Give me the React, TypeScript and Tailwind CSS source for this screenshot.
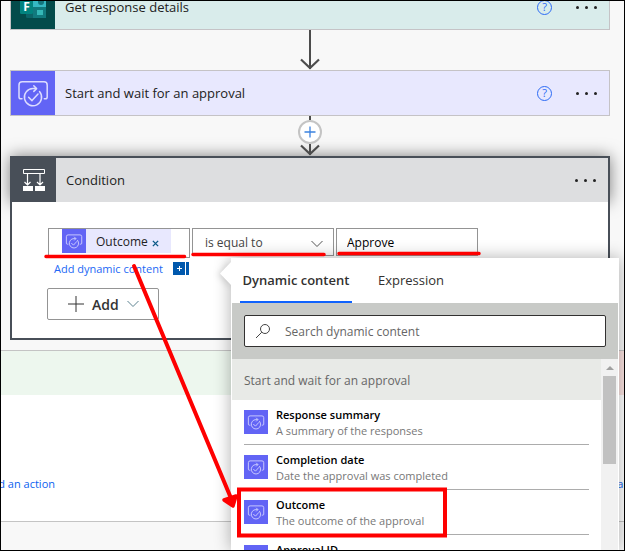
import type { ReactNode } from "react";

function ApprovalIcon({ className }: { className: string }) {
  return (
    <svg viewBox="0 0 44 44" className={`shrink-0 bg-[#6264f5] ${className}`} aria-hidden="true">
      <g fill="none" stroke="#dcdcff" strokeWidth="1.5" strokeLinecap="round" strokeLinejoin="round">
        <path d="M11 27.8 H9.8 Q8 27.8 8 26 V14 Q8 10.8 11.2 10.8 H33 Q36.200 10.8 36.200 14 V26 Q36.200 27.8 34.400 27.8 H33.300" />
        <path d="M24.500 17.600 H22 A8.600 8.600 0 1 0 28.500 20.600" />
        <path d="M22.800 14.800 L25.600 17.600 L22.800 20.400" />
        <path d="M17.600 26.200 L21 29.600 L27 23" />
      </g>
    </svg>
  );
}

function FormsIcon() {
  return (
    <svg viewBox="0 0 44 44" className="h-11 w-11 shrink-0 bg-[#034b4b]" aria-hidden="true">
      <rect x="15" y="9" width="20" height="24" rx="1.500" fill="#0c6468" />
      <rect x="22" y="9" width="13" height="13" fill="#35b8c3" />
      <circle cx="30" cy="17" r="3" fill="#13757d" />
      <rect x="22" y="22" width="13" height="11" fill="#117a7e" />
      <rect x="26" y="25" width="6" height="5" fill="#35b8b8" />
      <rect x="9" y="13" width="13" height="16" rx="1.500" fill="#02837f" />
      <text x="15.500" y="26" textAnchor="middle" fontSize="12" fontWeight="700" fill="#fff" fontFamily="Open Sans, sans-serif">
        F
      </text>
    </svg>
  );
}

function ConditionIcon() {
  return (
    <svg viewBox="0 0 44 44" className="h-11 w-11 shrink-0 bg-[#484f58]" aria-hidden="true">
      <g fill="none" stroke="#fff">
        <path d="M11.500 11.500 H32.500 V15.500 H11.500 Z" />
        <path d="M15.500 16 V27 M12.500 24 L15.500 27 L18.500 24 M28 16 V27 M25 24 L28 27 L31 24" strokeWidth="1.200" />
      </g>
      <path d="M11 28 H21 V33 H11 Z M23 28 H33 V33 H23 Z" fill="#fff" />
    </svg>
  );
}

function MoreButton() {
  return (
    <button type="button" aria-label="More commands" className="flex h-6 w-6 items-center justify-center gap-[6px]">
      <span className="h-[3px] w-[3px] shrink-0 rounded-full bg-[#222]" />
      <span className="h-[3px] w-[3px] shrink-0 rounded-full bg-[#222]" />
      <span className="h-[3px] w-[3px] shrink-0 rounded-full bg-[#222]" />
    </button>
  );
}

function ActionCard({ icon, title, className }: { icon: ReactNode; title: string; className: string }) {
  return (
    <section className={`flex h-[46px] shrink-0 items-center border border-[#c5c3c6] pr-[11px] ${className}`}>
      {icon}
      <h2 className="flex-1 pl-[10px] text-[13px] leading-5">{title}</h2>
      <button
        type="button"
        aria-label="Help"
        className="mr-[22px] flex h-[15px] w-[15px] items-center justify-center rounded-full border border-[#2c6bf5] text-[11px] leading-3 text-[#2c6bf5]"
      >
        ?
      </button>
      <MoreButton />
    </section>
  );
}

function ArrowTip() {
  return (
    <svg viewBox="0 0 20 12" className="h-3 w-5 shrink-0" aria-hidden="true">
      <path d="M1 1.500 L10 10 L19 1.500" fill="none" stroke="#4c4c4c" strokeWidth="2.200" />
    </svg>
  );
}

function Chevron({ className }: { className: string }) {
  return (
    <svg viewBox="0 0 12 8" className={`h-2 w-3 shrink-0 ${className}`} aria-hidden="true">
      <path d="M0.500 1 L6 6.500 L11.500 1" fill="none" stroke="currentColor" />
    </svg>
  );
}

function Branch({ tint, children }: { tint: string; children: ReactNode }) {
  return (
    <section className="flex h-[172px] flex-1 flex-col border-y border-[#c4c4c4] bg-white">
      <div className={`h-11 ${tint}`} />
      <div className="flex pt-[79px] text-[11px] leading-5 text-[#0b62f0]">{children}</div>
    </section>
  );
}

const outputs = [
  { name: "Response summary", detail: "A summary of the responses" },
  { name: "Completion date", detail: "Date the approval was completed" },
  { name: "Outcome", detail: "The outcome of the approval" },
  { name: "Approval ID", detail: "The unique identifier of the approval" },
];

function DynamicContentPanel() {
  return (
    <aside className="absolute top-[257px] right-[5px] bottom-0 left-[230px] bg-white shadow-[0_0_16px_rgba(0,0,0,0.32)]">
      <svg
        viewBox="0 0 12 26"
        className="absolute top-[3px] -left-[11px] h-[26px] w-3 drop-shadow-[-2px_1px_3px_rgba(0,0,0,0.15)]"
        aria-hidden="true"
      >
        <path d="M12 0 L0 12.500 L12 25 Z" fill="#fff" />
      </svg>
      <div className="relative flex h-full flex-col overflow-hidden bg-white px-px">
        <div role="tablist" className="flex h-[45px] shrink-0 gap-4 pl-2 text-[13px] text-[#323130]">
          <button
            role="tab"
            aria-selected="true"
            type="button"
            className="w-28 border-b-2 border-[#0f62fe] pt-[2px] font-semibold whitespace-nowrap"
          >
            Dynamic content
          </button>
          <button role="tab" aria-selected="false" type="button" className="border-b-2 border-transparent px-[10px] pt-[2px]">
            Expression
          </button>
        </div>
        <div className="h-14 shrink-0 bg-[#c8cac7] p-3">
          <label className="flex h-8 items-center rounded-[2px] border border-[#323130] bg-white pl-[10px]">
            <svg viewBox="0 0 16 16" className="h-4 w-4 shrink-0" aria-hidden="true">
              <g fill="none" stroke="#444">
                <circle cx="10" cy="6" r="4.500" />
                <path d="M6.800 9.200 L1 15" />
              </g>
            </svg>
            <input
              type="text"
              aria-label="Search dynamic content"
              placeholder="Search dynamic content"
              className="min-w-0 flex-1 pt-[2px] pl-[14px] text-[12px] outline-none placeholder:text-[#666]"
            />
          </label>
        </div>
        <div className="flex min-h-0 flex-1">
          <div className="min-w-0 flex-1 overflow-hidden">
            <h3 className="flex h-[41px] items-center bg-[#e8eae7] pt-[2px] pl-3 text-[12px] text-[#666]">
              Start and wait for an approval
            </h3>
            <ul className="pr-3 pl-3">
              {outputs.map((o) => (
                <li key={o.name} className="h-[45px] border-b border-[#acacac]">
                  <button type="button" className="flex h-full w-full items-center gap-2 text-left">
                    <ApprovalIcon className="h-6 w-6" />
                    <span className="flex flex-col pt-[2px] text-[11px] leading-4">
                      <span className="font-semibold text-black">{o.name}</span>
                      <span className="text-[#777]">{o.detail}</span>
                    </span>
                  </button>
                </li>
              ))}
            </ul>
          </div>
          <div className="w-[17px] bg-[#f1f1f1] px-[2px]">
            <div className="flex h-[17px] items-center justify-center">
              <svg viewBox="0 0 8 4" className="h-1 w-2" aria-hidden="true">
                <path d="M0 4 L4 0 L8 4 Z" fill="#a0a0a0" />
              </svg>
            </div>
            <div className="h-[88px] bg-[#c1c1c1]" />
          </div>
        </div>
      </div>
    </aside>
  );
}

function Annotations() {
  return (
    <svg viewBox="0 0 625 551" className="pointer-events-none absolute -top-px -left-px h-[551px] w-[625px]" aria-hidden="true">
      <g fill="none" stroke="#fe0000" strokeLinecap="round" strokeLinejoin="round">
        <path d="M46 256.500 H184.500 M193 254.500 H324 M339 253.500 H479" strokeWidth="3.500" />
        <path d="M134 266 L233 503" strokeWidth="4" />
        <path d="M224 500 L233 506 L236 496 Z" fill="#fe0000" strokeWidth="3.500" />
        <path d="M239 489.500 H445 V535.500 H239 Z" strokeWidth="4" strokeLinejoin="miter" />
      </g>
    </svg>
  );
}

export default function App() {
  return (
    <main className="relative flex h-screen flex-col overflow-hidden border border-black bg-[#f8f8f8] font-['Open_Sans','Noto_Sans',sans-serif] text-[#222]">
      <div className="flex flex-col pr-[14px] pl-[9px]">
        <ActionCard icon={<FormsIcon />} title="Get response details" className="-mt-[17px] bg-[#d9eceb]" />
        <div className="flex h-10 flex-col items-center">
          <div className="-mb-[11px] w-[2px] flex-1 bg-[#4c4c4c]" />
          <ArrowTip />
        </div>
        <ActionCard icon={<ApprovalIcon className="h-11 w-11" />} title="Start and wait for an approval" className="bg-[#e8e8fe]" />
        <div className="relative z-10 flex h-10 flex-col items-center">
          <div className="h-1 w-[2px] bg-[#4c4c4c]" />
          <button
            type="button"
            aria-label="Insert a new step"
            className="flex h-6 w-6 shrink-0 items-center justify-center rounded-full border-2 border-[#c4c4c4] bg-white"
          >
            <svg viewBox="0 0 12 12" className="h-3 w-3" aria-hidden="true">
              <path d="M6 0.500 V11.500 M0.500 6 H11.500" stroke="#3b82e0" strokeWidth="1.300" />
            </svg>
          </button>
          <div className="-mb-[11px] w-[2px] flex-1 bg-[#4c4c4c]" />
          <ArrowTip />
        </div>

        <section>
          <header className="flex h-[46px] items-center border-x-2 border-t-2 border-[#484f58] bg-[#dddee0] pr-[11px] shadow-[0_0_16px_rgba(0,0,0,0.5)]">
            <ConditionIcon />
            <h2 className="flex-1 pl-[10px] text-[13px] leading-5">Condition</h2>
            <MoreButton />
          </header>
          <div className="relative h-[138px] border-x-2 border-b-2 border-[#484f58] bg-white pt-[26px] pl-[35px]">
            <div className="flex items-start gap-[2px] pl-px text-[12px]">
              <div className="flex h-[30px] w-[142px] border border-[#949494] pl-[13px]">
                <span className="flex h-6 w-[109px] items-center bg-[#e8e8fe]">
                  <ApprovalIcon className="h-6 w-6" />
                  <span className="pt-[2px] pl-[10px]">Outcome</span>
                  <button type="button" aria-label="Remove Outcome" className="flex flex-1 pt-1 pl-1">
                    <svg viewBox="0 0 8 8" className="h-[7px] w-[7px]" aria-hidden="true">
                      <path d="M1 1 L7 7 M7 1 L1 7" stroke="#0b5a87" strokeWidth="1.600" />
                    </svg>
                  </button>
                </span>
              </div>
              <div className="grid h-7 w-[142px] items-center border border-[#949494]">
                <select
                  aria-label="Operator"
                  className="col-start-1 row-start-1 h-full w-full appearance-none bg-transparent pt-[2px] pl-3 text-[#444] outline-none"
                >
                  <option>is equal to</option>
                </select>
                <Chevron className="pointer-events-none col-start-1 row-start-1 mt-1 mr-[10px] justify-self-end text-[#555]" />
              </div>
              <input
                type="text"
                aria-label="Value"
                defaultValue="Approve"
                className="h-7 w-[142px] border border-[#949494] bg-white pl-[10px] text-black outline-none"
              />
            </div>
            <div className="flex h-[30px] items-start gap-[10px] pl-[7px]">
              <a href="#dynamic" className="pt-px text-[11px] leading-5 text-[#2268f5]">
                Add dynamic content
              </a>
              <span className="mt-1 flex h-[13px] gap-px">
                <svg viewBox="0 0 12 13" className="h-[13px] w-3 bg-[#0058ad]" aria-hidden="true">
                  <path d="M6.500 4 V9 M4 6.500 H9" stroke="#fff" />
                </svg>
                <span className="w-[3px] bg-[#0058ad]" />
              </span>
            </div>
            <button type="button" className="flex h-8 w-28 items-center rounded-[2px] border border-[#949494] pl-5 text-[14px] font-semibold text-[#333]">
              <svg viewBox="0 0 16 16" className="mr-2 h-4 w-4" aria-hidden="true">
                <path d="M8 0 V16 M0 8 H16" stroke="#333" />
              </svg>
              Add
              <Chevron className="ml-2 text-[#5d8290]" />
            </button>
          </div>
        </section>
      </div>

      <div className="mt-[10px] flex gap-5">
        <Branch tint="bg-[#edf7ee]">
          <a href="#yes" className="flex w-[54px] justify-end whitespace-nowrap">
            Add an action
          </a>
        </Branch>
        <Branch tint="bg-[#fbe3e1]">
          <a href="#no" className="ml-auto w-[30px] whitespace-nowrap">
            Add an action
          </a>
        </Branch>
      </div>

      <DynamicContentPanel />
      <Annotations />
    </main>
  );
}
